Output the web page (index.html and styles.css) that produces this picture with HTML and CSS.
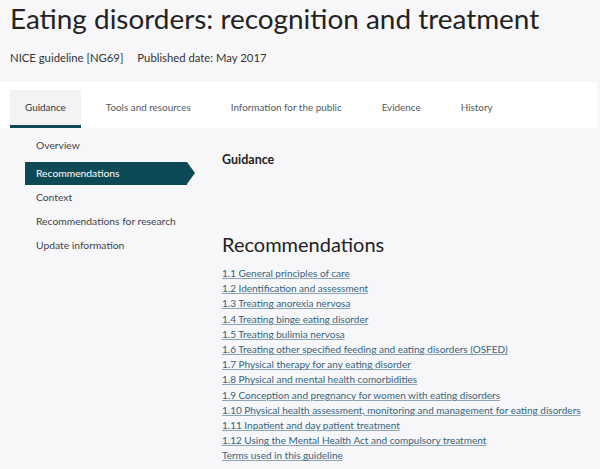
FILE: index.html
```html
<!DOCTYPE html>
<html lang="en">
<head>
<meta charset="utf-8">
<title>Eating disorders: recognition and treatment</title>
<link rel="stylesheet" href="styles.css">
</head>
<body>
<div class="page">
  <header class="header">
    <h1 class="title">Eating disorders: recognition and treatment</h1>
    <p class="meta"><span>NICE guideline [NG69]</span><span>Published date: May 2017</span></p>
  </header>
  <nav class="tabs">
    <a class="tab active" href="#">Guidance</a>
    <a class="tab" href="#">Tools and resources</a>
    <a class="tab" href="#">Information for the public</a>
    <a class="tab" href="#">Evidence</a>
    <a class="tab" href="#">History</a>
  </nav>
  <div class="body">
    <ul class="side">
      <li class="side-item first"><a href="#">Overview</a></li>
      <li class="side-item current"><a href="#">Recommendations</a></li>
      <li class="side-item"><a href="#">Context</a></li>
      <li class="side-item"><a href="#">Recommendations for research</a></li>
      <li class="side-item"><a href="#">Update information</a></li>
    </ul>
    <main class="main">
      <h3 class="label">Guidance</h3>
      <h2 class="heading">Recommendations</h2>
      <ul class="links">
        <li><a href="#">1.1 General principles of care</a></li>
        <li><a href="#">1.2 Identification and assessment</a></li>
        <li><a href="#">1.3 Treating anorexia nervosa</a></li>
        <li><a href="#">1.4 Treating binge eating disorder</a></li>
        <li><a href="#">1.5 Treating bulimia nervosa</a></li>
        <li><a href="#">1.6 Treating other specified feeding and eating disorders (OSFED)</a></li>
        <li><a href="#">1.7 Physical therapy for any eating disorder</a></li>
        <li><a href="#">1.8 Physical and mental health comorbidities</a></li>
        <li><a href="#">1.9 Conception and pregnancy for women with eating disorders</a></li>
        <li><a href="#">1.10 Physical health assessment, monitoring and management for eating disorders</a></li>
        <li><a href="#">1.11 Inpatient and day patient treatment</a></li>
        <li><a href="#">1.12 Using the Mental Health Act and compulsory treatment</a></li>
        <li><a href="#">Terms used in this guideline</a></li>
      </ul>
    </main>
  </div>
</div>
</body>
</html>
```
FILE: styles.css
```css
html, body {
  margin: 0;
  padding: 0;
}
body {
  background: #f7f7f9;
  font-family: Lato, "Open Sans", Arial, sans-serif;
  color: #2b2b2b;
  width: 600px;
  height: 469px;
  overflow: hidden;
}
.page {
  width: 597px;
}
.header {
  padding: 0 10px;
  height: 82px;
  background: #f7f7f9;
}
.title {
  margin: 0;
  font-size: 27.9px;
  line-height: 36px;
  font-weight: 400;
  color: #222;
}
.meta {
  margin: 14px 0 0;
  font-size: 11.3px;
  line-height: 16px;
  color: #333;
  display: flex;
  gap: 14px;
}
.tabs {
  background: #fff;
  height: 46px;
  display: flex;
  align-items: flex-end;
  gap: 10px;
  padding-left: 10px;
}
.tab {
  height: 35px;
  line-height: 35px;
  padding: 0 15px;
  font-size: 9.9px;
  color: #505a60;
  text-decoration: none;
  border-bottom: 3px solid transparent;
}
.tab.active {
  background: #f3f3f3;
  color: #333;
  border-bottom-color: #0e4a55;
}
.body {
  display: flex;
  padding: 6px 0 0 25px;
}
.side {
  list-style: none;
  margin: 0;
  padding: 0;
  width: 170px;
  flex: none;
}
.side-item {
  height: 23px;
  line-height: 23px;
  margin-bottom: 1px;
  font-size: 10.3px;
}
.side-item.first {
  margin-bottom: 5px;
}
.side-item a {
  display: block;
  padding-left: 11px;
  color: #404448;
  text-decoration: none;
}
.side-item.current a {
  position: relative;
  width: 151px;
  background: #0e4a55;
  color: #fff;
}
.side-item.current a::after {
  content: "";
  position: absolute;
  right: -8px;
  top: 0;
  border-left: 8px solid #0e4a55;
  border-top: 11.5px solid transparent;
  border-bottom: 11.5px solid transparent;
}
.main {
  padding-left: 27px;
}
.label {
  margin: 18px 0 0;
  font-size: 12.5px;
  line-height: 16px;
  font-weight: 700;
  color: #222;
}
.heading {
  margin: 64px 0 0;
  font-size: 20px;
  line-height: 24px;
  font-weight: 400;
  color: #222;
}
.links {
  list-style: none;
  margin: 10px 0 0;
  padding: 0;
  font-size: 10px;
  line-height: 15.2px;
}
.links a {
  color: #36637a;
  text-decoration: underline;
  text-decoration-color: #8aa5b3;
  text-underline-offset: 1px;
}
```
